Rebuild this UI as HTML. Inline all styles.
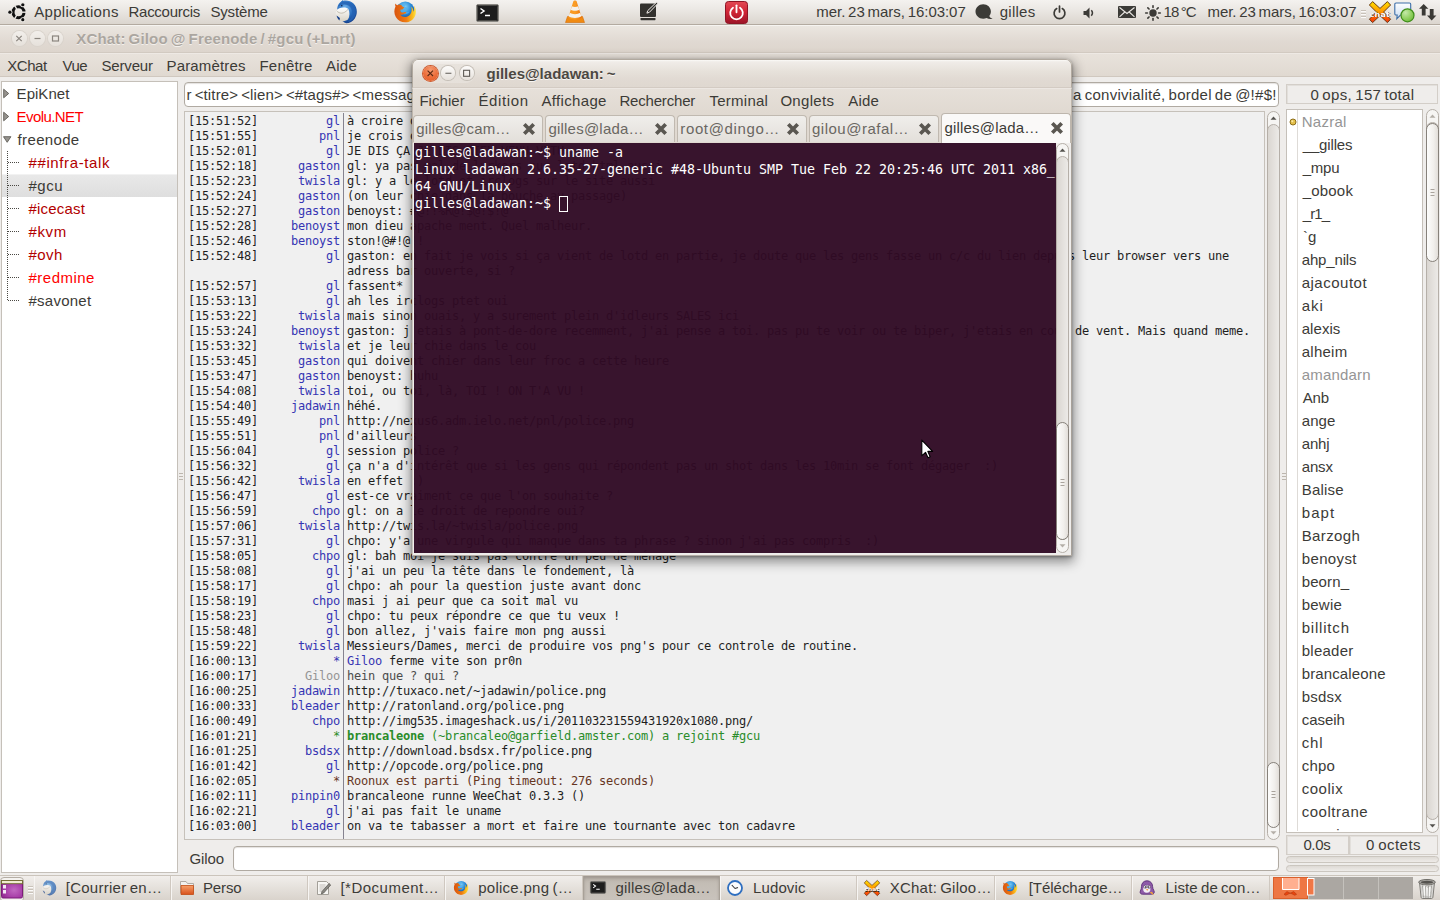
<!DOCTYPE html>
<html lang="fr"><head><meta charset="utf-8"><title>XChat: Giloo @ Freenode / #gcu (+Lnrt)</title>
<style>
*{box-sizing:border-box;margin:0;padding:0}
html,body{width:1440px;height:900px;overflow:hidden;background:#efedeb;font-family:"Liberation Sans","DejaVu Sans",sans-serif;font-size:15px;color:#3c3b37}
body{position:relative}
.a{position:absolute;white-space:pre}
svg{position:absolute;overflow:visible}
#toppanel{position:absolute;left:0;top:0;width:1440px;height:25px;background:linear-gradient(#f4f2ef,#ebe8e4 40%,#dbd5ce);border-bottom:1px solid #b3aaa0}
#toppanel span{position:absolute;top:3px;line-height:18px;white-space:pre;color:#3c3b37}
#xtitle{position:absolute;left:0;top:25px;width:1440px;height:28px;background:linear-gradient(#ebe6e0,#e0d9d2 60%,#ddd5cd);border-top:1px solid #f6f4f1;border-bottom:1px solid #d2cac1}
#xtitle span{position:absolute;top:3px;line-height:20px;font-weight:bold;color:#aba6a0;white-space:pre;text-shadow:0 1px 0 #f3f0ec}
.wb{position:absolute;width:15px;height:15px;border-radius:50%}
#xmenu{position:absolute;left:0;top:53px;width:1440px;height:24px;background:linear-gradient(#e8e2db,#e0d9d1);border-top:1px solid #eee9e4;border-bottom:1px solid #d0c8bf}
#xmenu span{position:absolute;top:2px;line-height:20px;white-space:pre}
#tree{position:absolute;left:1px;top:81px;width:177px;height:792px;background:#fff;border:1px solid #c5c0b9}
#tree .r{position:absolute;left:0;width:175px;height:23px;line-height:23px}
#tree .r span{position:absolute;top:0;white-space:pre}
#topic{position:absolute;left:184px;top:82px;width:1095px;height:25px;background:#fff;border:1px solid #b0aaa2;border-radius:4px;overflow:hidden;box-shadow:inset 0 1px 1px #e4e2df}
#topic span{position:absolute;top:2px;line-height:20px;white-space:pre}
#chat{position:absolute;left:184px;top:111px;width:1081px;height:729px;background:#f0f0f0;border:1px solid #c6c1ba;overflow:hidden;font-family:"DejaVu Sans Mono","Liberation Mono",monospace;font-size:12px;letter-spacing:-0.224px;line-height:15px;color:#1e1e1e}
#chat .l{position:absolute;left:0;width:1079px;height:15px}
#chat .l span{position:absolute;top:0;white-space:pre}
#chat .ts{left:3px}
#chat .n{right:924px;color:#3535b3}
#chat .m{left:162px}
#chat .sep{position:absolute;left:158px;top:1px;width:1px;height:726px;background:#85838f}
.sbv{position:absolute;border-radius:7px;background:#f6f5f3;border:1px solid #b5afa8}
.trough{position:absolute;border-radius:7px;background:linear-gradient(90deg,#dad6d1,#e4e1dd 55%,#eceae7);border:1px solid #b5afa8}
.thumb{position:absolute;border-radius:7px;background:linear-gradient(90deg,#fdfdfc,#f1efec 60%,#e2ded9);border:1px solid #86817a}
#ulhead{position:absolute;left:1286px;top:84px;width:152px;height:20px;border:1px solid #d3cec8;background:#efedeb;box-shadow:inset 1px 1px 0 #e2dfdb}
#ulhead span{position:absolute;top:0;line-height:20px;white-space:pre}
#ulist{position:absolute;left:1286px;top:109px;width:137px;height:724px;background:#fff;border:1px solid #c5c0b9;overflow:hidden}
#ulist span{position:absolute;height:23px;line-height:23px;white-space:pre}
#ulist .vs{position:absolute;left:10px;top:0;width:1px;height:721px;background:#dedbd7}
.stat{position:absolute;top:835px;height:20px;border:1px solid #d3cec8;background:#efedeb;box-shadow:inset 1px 1px 0 #e2dfdb}
.stat span{position:absolute;top:-1px;line-height:20px;white-space:pre}
.pbar{position:absolute;left:1286px;width:153px;height:7px;border-radius:4px;border:1px solid #cbc6bf;background:linear-gradient(#dedad5,#eeebe8)}
#input{position:absolute;left:233px;top:846px;width:1046px;height:25px;background:#fff;border:1px solid #b0aaa2;border-radius:4px;box-shadow:inset 0 1px 1px #e4e2df}
#botpanel{position:absolute;left:0;top:875px;width:1440px;height:25px;background:linear-gradient(#f1eeeb,#e6e2dd 45%,#d9d3cc);border-top:1px solid #cbc4bb}
.tb{position:absolute;top:0;height:24px;border-left:1px solid #f7f5f3;border-right:1px solid #cfc8c0}
.tb.act{background:linear-gradient(#b5aea6,#c3bdb5 30%,#c9c3bc);border-left:1px solid #a8a198;border-right:1px solid #a8a198;box-shadow:inset 0 2px 3px #9e978f}
#botpanel span{position:absolute;top:2px;line-height:20px;white-space:pre}
#tshadow{position:absolute;left:412px;top:59px;width:660px;height:497px;border-radius:6px 6px 0 0;box-shadow:0 4px 12px 2px rgba(0,0,0,.42),0 1px 3px rgba(0,0,0,.35)}
#term{position:absolute;left:412px;top:59px;width:660px;height:497px;border-radius:6px 6px 0 0;overflow:hidden}
#ttitle{position:absolute;left:0;top:0;width:660px;height:29px;border-radius:6px 6px 0 0;background:linear-gradient(#fbfaf8,#f0ece8 7%,#e7e2db 40%,#e1dad3 70%,#dfd8d0);border:1px solid #b1a99f;border-bottom:1px solid #d3cbc3}
#ttitle span{position:absolute;top:4px;line-height:20px;font-weight:bold;color:#4c4842;white-space:pre;text-shadow:0 1px 0 #f8f6f3}
#tmenu{position:absolute;left:0;top:29px;width:660px;height:25px;background:linear-gradient(#e6e0d9,#e0d9d1);border-left:1px solid #bdb5ab;border-right:1px solid #bdb5ab;border-top:1px solid #ece7e2}
#tmenu span{position:absolute;top:2px;line-height:20px;white-space:pre}
#ttabs{position:absolute;left:0;top:54px;width:660px;height:30px;background:#e0d9d1;border-left:1px solid #bdb5ab;border-right:1px solid #bdb5ab}
.tab{position:absolute;top:2px;height:27px;border:1px solid #c0b9b0;border-bottom:none;border-radius:4px 4px 0 0;background:linear-gradient(#f0eeeb,#e3dfda)}
.tab.on{top:0;height:30px;background:#faf9f8;border-color:#bdb6ad}
.tab span{position:absolute;top:3px;line-height:20px;white-space:pre;color:#6a6762}
.tab.on span{top:4px;color:#3c3b37}
.tab b{position:absolute;top:6px;width:14px;height:14px}
.tab.on b{top:7px}
.tfr{position:absolute;background:#efedeb}
#tscreen{position:absolute;left:2px;top:84px;width:642px;height:410px;background:rgba(48,10,36,.962);font-family:"DejaVu Sans Mono","Liberation Mono",monospace;font-size:13.3px;letter-spacing:-0.007px;line-height:17px;color:#fff}
#tscreen div{position:absolute;left:1px;white-space:pre;height:17px}
</style></head><body>
<div id="xtitle"><div class="wb" style="left:11.5px;top:5px;background:linear-gradient(#f2efeb,#e6e1db);box-shadow:0 0 0 1px #d9d3cc"></div><div class="wb" style="left:30.0px;top:5px;background:linear-gradient(#f2efeb,#e6e1db);box-shadow:0 0 0 1px #d9d3cc"></div><div class="wb" style="left:48.0px;top:5px;background:linear-gradient(#f2efeb,#e6e1db);box-shadow:0 0 0 1px #d9d3cc"></div><svg style="left:0;top:0" width="70" height="27" viewBox="0 0 70 27"><g stroke="#8a857f" stroke-width="1.2" fill="none"><path d="M16.3 9.800l5.400 5.400M21.700 9.800l-5.400 5.400"/><path d="M34.500 12.500h6"/><rect x="52.500" y="10" width="6" height="5"/></g></svg><span style="left:76.25px;letter-spacing:0.164px;word-spacing:-1.3px;">XChat: Giloo @ Freenode / #gcu (+Lnrt)</span></div>
<div id="xmenu"><span style="left:7.25px;letter-spacing:-0.438px;">XChat</span><span style="left:62.5px;letter-spacing:-0.5px;">Vue</span><span style="left:101.5px;letter-spacing:-0.167px;">Serveur</span><span style="left:166.5px;letter-spacing:0.167px;">Paramètres</span><span style="left:259.5px;letter-spacing:0.2px;">Fenêtre</span><span style="left:326.0px;letter-spacing:0.233px;">Aide</span></div>
<div id="tree"><div class="r" style="top:0px"><span style="left:14.6px;letter-spacing:0.033px;color:#3c3b37">EpiKnet</span></div><div class="r" style="top:23px"><span style="left:14.6px;letter-spacing:-0.575px;color:#ff0000">Evolu.NET</span></div><div class="r" style="top:46px"><span style="left:15.6px;letter-spacing:0.343px;color:#3c3b37">freenode</span></div><div class="r" style="top:69px"><span style="left:26.5px;letter-spacing:0.618px;color:#b20000">##infra-talk</span></div><div class="r" style="top:92px;background:linear-gradient(#e9e9e9,#dedede);box-shadow:inset 0 1px 0 #f2f2f2"><span style="left:26.5px;letter-spacing:0.5px;color:#3c3b37">#gcu</span></div><div class="r" style="top:115px"><span style="left:26.5px;letter-spacing:0.186px;color:#b20000">#icecast</span></div><div class="r" style="top:138px"><span style="left:26.5px;letter-spacing:0.6px;color:#b20000">#kvm</span></div><div class="r" style="top:161px"><span style="left:26.5px;letter-spacing:0.467px;color:#b20000">#ovh</span></div><div class="r" style="top:184px"><span style="left:26.5px;letter-spacing:0.486px;color:#ff0000">#redmine</span></div><div class="r" style="top:207px"><span style="left:26.5px;letter-spacing:0.243px;color:#3c3b37">#savonet</span></div><svg style="left:0;top:0" width="60" height="240" viewBox="0 0 60 240"><path d="M1.700 7.200l5 4.300-5 4.300z" fill="#96938e" stroke="#5f5c57" stroke-width=".9"/><path d="M1.700 30.200l5 4.300-5 4.300z" fill="#96938e" stroke="#5f5c57" stroke-width=".9"/><path d="M1.500 54.700h7.400l-3.700 5.600z" fill="#96938e" stroke="#5f5c57" stroke-width=".9"/><g stroke="#4a4843" stroke-width="1" stroke-dasharray="1 1" fill="none"><path d="M5.500 69v150"/><path d="M6 80.5h11"/><path d="M6 103.5h11"/><path d="M6 126.5h11"/><path d="M6 149.5h11"/><path d="M6 172.5h11"/><path d="M6 195.5h11"/><path d="M6 218.5h11"/></g></svg></div>
<div id="topic"><span style="left:1.5px;letter-spacing:0.142px;word-spacing:-1.3px">r &lt;titre&gt; &lt;lien&gt; &lt;#tags#&gt; &lt;message&gt; | GCU-Squad! : gcu.info | irclogs sur le site | Ici on cause de tout</span><span style="left:888.0px;letter-spacing:0.247px;word-spacing:-1.3px;background:#fff">a convivialité, bordel de @!#$!</span><span style="right:206px;background:#fff;padding-left:6px">et de rien, dans l</span></div>
<div id="chat"><div class="sep"></div><div class="l" style="top:2px"><span class="ts">[15:51:52]</span><span class="n">gl</span><span class="m">à croire que personne ne lit le topic</span></div><div class="l" style="top:17px"><span class="ts">[15:51:55]</span><span class="n">pnl</span><span class="m">je crois que tout le monde est parti</span></div><div class="l" style="top:32px"><span class="ts">[15:52:01]</span><span class="n">gl</span><span class="m">JE DIS ÇA JE DIS RIEN VENU VITU</span></div><div class="l" style="top:47px"><span class="ts">[15:52:18]</span><span class="n">gaston</span><span class="m">gl: ya pas mal de lurkers sur lotd.html aussi</span></div><div class="l" style="top:62px"><span class="ts">[15:52:23]</span><span class="n">twisla</span><span class="m">gl: y a le lotd et irclogs sur le site aussi</span></div><div class="l" style="top:77px"><span class="ts">[15:52:24]</span><span class="n">gaston</span><span class="m">(on leur chie dans la bouche au passage)</span></div><div class="l" style="top:92px"><span class="ts">[15:52:27]</span><span class="n">gaston</span><span class="m">benoyst: #@!!%R@!$@!$!@</span></div><div class="l" style="top:107px"><span class="ts">[15:52:28]</span><span class="n">benoyst</span><span class="m">mon dieu apache ment. Quel malheur.</span></div><div class="l" style="top:122px"><span class="ts">[15:52:46]</span><span class="n">benoyst</span><span class="m">ston!@#!@!!</span></div><div class="l" style="top:137px"><span class="ts">[15:52:48]</span><span class="n">gl</span><span class="m">gaston: en fait je vois si ça vient de lotd en partie, je doute que les gens fasse un c/c du lien depuis leur browser vers une</span></div><div class="l" style="top:152px"><span class="m">adress bar ouverte, si ?</span></div><div class="l" style="top:167px"><span class="ts">[15:52:57]</span><span class="n">gl</span><span class="m">fassent*</span></div><div class="l" style="top:182px"><span class="ts">[15:53:13]</span><span class="n">gl</span><span class="m">ah les irclogs ptet oui</span></div><div class="l" style="top:197px"><span class="ts">[15:53:22]</span><span class="n">twisla</span><span class="m">mais sinon ouais, y a surement plein d'idleurs SALES ici</span></div><div class="l" style="top:212px"><span class="ts">[15:53:24]</span><span class="n">benoyst</span><span class="m">gaston: j'etais à pont-de-dore recemment, j'ai pense a toi. pas pu te voir ou te biper, j'etais en coup de vent. Mais quand meme.</span></div><div class="l" style="top:227px"><span class="ts">[15:53:32]</span><span class="n">twisla</span><span class="m">et je leur chie dans le cou</span></div><div class="l" style="top:242px"><span class="ts">[15:53:45]</span><span class="n">gaston</span><span class="m">qui doivent chier dans leur froc a cette heure</span></div><div class="l" style="top:257px"><span class="ts">[15:53:47]</span><span class="n">gaston</span><span class="m">benoyst: huhu</span></div><div class="l" style="top:272px"><span class="ts">[15:54:08]</span><span class="n">twisla</span><span class="m">toi, ou toi, là, TOI ! ON T'A VU !</span></div><div class="l" style="top:287px"><span class="ts">[15:54:40]</span><span class="n">jadawin</span><span class="m">héhé.</span></div><div class="l" style="top:302px"><span class="ts">[15:55:49]</span><span class="n">pnl</span><span class="m">http://nexus6.adm.ielo.net/pnl/police.png</span></div><div class="l" style="top:317px"><span class="ts">[15:55:51]</span><span class="n">pnl</span><span class="m">d'ailleurs</span></div><div class="l" style="top:332px"><span class="ts">[15:56:04]</span><span class="n">gl</span><span class="m">session police ?</span></div><div class="l" style="top:347px"><span class="ts">[15:56:32]</span><span class="n">gl</span><span class="m">ça n'a d'intérêt que si les gens qui répondent pas un shot dans les 10min se font dégager  :)</span></div><div class="l" style="top:362px"><span class="ts">[15:56:42]</span><span class="n">twisla</span><span class="m">en effet :)</span></div><div class="l" style="top:377px"><span class="ts">[15:56:47]</span><span class="n">gl</span><span class="m">est-ce vraiment ce que l'on souhaite ?</span></div><div class="l" style="top:392px"><span class="ts">[15:56:59]</span><span class="n">chpo</span><span class="m">gl: on a le droit de repondre oui?</span></div><div class="l" style="top:407px"><span class="ts">[15:57:06]</span><span class="n">twisla</span><span class="m">http://twis.la/~twisla/police.png</span></div><div class="l" style="top:422px"><span class="ts">[15:57:31]</span><span class="n">gl</span><span class="m">chpo: y'a une virgule qui manque dans ta phrase ? sinon j'ai pas compris  :)</span></div><div class="l" style="top:437px"><span class="ts">[15:58:05]</span><span class="n">chpo</span><span class="m">gl: bah moi je suis pas contre un peu de ménage</span></div><div class="l" style="top:452px"><span class="ts">[15:58:08]</span><span class="n">gl</span><span class="m">j'ai un peu la tête dans le fondement, là</span></div><div class="l" style="top:467px"><span class="ts">[15:58:17]</span><span class="n">gl</span><span class="m">chpo: ah pour la question juste avant donc</span></div><div class="l" style="top:482px"><span class="ts">[15:58:19]</span><span class="n">chpo</span><span class="m">masi j ai peur que ca soit mal vu</span></div><div class="l" style="top:497px"><span class="ts">[15:58:23]</span><span class="n">gl</span><span class="m">chpo: tu peux répondre ce que tu veux !</span></div><div class="l" style="top:512px"><span class="ts">[15:58:48]</span><span class="n">gl</span><span class="m">bon allez, j'vais faire mon png aussi</span></div><div class="l" style="top:527px"><span class="ts">[15:59:22]</span><span class="n">twisla</span><span class="m">Messieurs/Dames, merci de produire vos png's pour ce controle de routine.</span></div><div class="l" style="top:542px"><span class="ts">[16:00:13]</span><span class="n">*</span><span class="m"><span style="position:static;color:#3535b3">Giloo</span> ferme vite son pr0n</span></div><div class="l" style="top:557px"><span class="ts">[16:00:17]</span><span class="n" style="color:#959595">Giloo</span><span class="m" style="color:#4c4c4c">hein que ? qui ?</span></div><div class="l" style="top:572px"><span class="ts">[16:00:25]</span><span class="n">jadawin</span><span class="m">http://tuxaco.net/~jadawin/police.png</span></div><div class="l" style="top:587px"><span class="ts">[16:00:33]</span><span class="n">bleader</span><span class="m">http://ratonland.org/police.png</span></div><div class="l" style="top:602px"><span class="ts">[16:00:49]</span><span class="n">chpo</span><span class="m">http://img535.imageshack.us/i/201103231559431920x1080.png/</span></div><div class="l" style="top:617px"><span class="ts">[16:01:21]</span><span class="n" style="color:#2a8c2a">*</span><span class="m" style="color:#2a8c2a"><b style="font-weight:bold">brancaleone</b> (~brancaleo@garfield.amster.com) a rejoint #gcu</span></div><div class="l" style="top:632px"><span class="ts">[16:01:25]</span><span class="n">bsdsx</span><span class="m">http://download.bsdsx.fr/police.png</span></div><div class="l" style="top:647px"><span class="ts">[16:01:42]</span><span class="n">gl</span><span class="m">http://opcode.org/police.png</span></div><div class="l" style="top:662px"><span class="ts">[16:02:05]</span><span class="n" style="color:#66361f">*</span><span class="m" style="color:#66361f">Roonux est parti (Ping timeout: 276 seconds)</span></div><div class="l" style="top:677px"><span class="ts">[16:02:11]</span><span class="n">pinpin0</span><span class="m">brancaleone runne WeeChat 0.3.3 ()</span></div><div class="l" style="top:692px"><span class="ts">[16:02:21]</span><span class="n">gl</span><span class="m">j'ai pas fait le uname</span></div><div class="l" style="top:707px"><span class="ts">[16:03:00]</span><span class="n">bleader</span><span class="m">on va te tabasser a mort et faire une tournante avec ton cadavre</span></div></div>
<div class="sbv" style="left:1267px;top:111px;width:13px;height:729px"></div><div class="trough" style="left:1267px;top:124px;width:13px;height:703px"></div><div class="thumb" style="left:1267px;top:762px;width:13px;height:66px"></div><svg style="left:1267px;top:111px" width="13" height="729" viewBox="0 0 13 729"><path d="M3.5 8.800h6l-3-3.300z" fill="#55534f"/><path d="M3.5 720.2h6l-3 3.300z" fill="#b4afa8"/><g stroke="#a9a39c"><path d="M4.5 680.5h4M4.5 683.5h4M4.5 686.5h4"/></g></svg><svg style="left:178px;top:470px" width="6" height="14" viewBox="0 0 6 14"><g stroke="#bcb6ae"><path d="M1 3.500h4M1 6.500h4M1 9.500h4"/></g></svg><svg style="left:1281px;top:470px" width="6" height="14" viewBox="0 0 6 14"><g stroke="#bcb6ae"><path d="M1 3.500h4M1 6.500h4M1 9.500h4"/></g></svg><div id="ulhead"><span style="left:23.5px;letter-spacing:0.327px;word-spacing:-1.3px;">0 ops, 157 total</span></div><div id="ulist"><div class="vs"></div><span style="left:14.7px;letter-spacing:0.26px;top:0px;color:#959595;">Nazral</span><span style="left:15.7px;letter-spacing:-0.143px;top:23px;">__gilles</span><span style="left:15.7px;letter-spacing:-0.233px;top:46px;">_mpu</span><span style="left:15.7px;letter-spacing:0.2px;top:69px;">_obook</span><span style="left:15.7px;letter-spacing:-0.9px;top:92px;">_r1_</span><span style="left:16.0px;letter-spacing:0.0px;top:115px;">`g</span><span style="left:14.7px;letter-spacing:-0.143px;top:138px;">ahp_nils</span><span style="left:14.7px;letter-spacing:0.5px;top:161px;">ajacoutot</span><span style="left:14.7px;letter-spacing:1.0px;top:184px;">aki</span><span style="left:14.7px;letter-spacing:0.06px;top:207px;">alexis</span><span style="left:14.7px;letter-spacing:0.26px;top:230px;">alheim</span><span style="left:14.7px;letter-spacing:0.186px;top:253px;color:#959595;">amandarn</span><span style="left:15.7px;letter-spacing:-0.2px;top:276px;">Anb</span><span style="left:14.7px;letter-spacing:0.1px;top:299px;">ange</span><span style="left:14.7px;letter-spacing:-0.133px;top:322px;">anhj</span><span style="left:14.7px;letter-spacing:-0.133px;top:345px;">ansx</span><span style="left:14.7px;letter-spacing:0.2px;top:368px;">Balise</span><span style="left:14.7px;letter-spacing:1.1px;top:391px;">bapt</span><span style="left:14.7px;letter-spacing:0.383px;top:414px;">Barzogh</span><span style="left:14.7px;letter-spacing:0.383px;top:437px;">benoyst</span><span style="left:14.7px;letter-spacing:0.12px;top:460px;">beorn_</span><span style="left:14.7px;letter-spacing:0.25px;top:483px;">bewie</span><span style="left:14.7px;letter-spacing:0.8px;top:506px;">billitch</span><span style="left:14.7px;letter-spacing:0.267px;top:529px;">bleader</span><span style="left:14.7px;letter-spacing:0.13px;top:552px;">brancaleone</span><span style="left:14.7px;letter-spacing:0.225px;top:575px;">bsdsx</span><span style="left:14.7px;letter-spacing:-0.04px;top:598px;">caseih</span><span style="left:14.7px;letter-spacing:0.8px;top:621px;">chl</span><span style="left:14.7px;letter-spacing:0.2px;top:644px;">chpo</span><span style="left:14.7px;letter-spacing:0.54px;top:667px;">coolix</span><span style="left:14.7px;letter-spacing:0.537px;top:690px;">cooltrane</span><span style="left:14.7px;letter-spacing:-0.34px;top:713px;">cosmic</span><svg style="left:2px;top:7.500px" width="8" height="8" viewBox="0 0 8 8"><circle cx="4" cy="4" r="3" fill="#e4c04a" stroke="#8d6f1c" stroke-width="1"/><circle cx="3.300" cy="3.200" r="1" fill="#f8e9a8"/></svg></div>
<div class="sbv" style="left:1426px;top:109px;width:13px;height:724px"></div><div class="trough" style="left:1426px;top:122px;width:13px;height:698px"></div><div class="thumb" style="left:1426px;top:123px;width:13px;height:139px"></div><svg style="left:1426px;top:109px" width="13" height="724" viewBox="0 0 13 724"><path d="M3.5 8.800h6l-3-3.300z" fill="#b4afa8"/><path d="M3.5 715.2h6l-3 3.300z" fill="#55534f"/><g stroke="#a9a39c"><path d="M4.5 80.5h4M4.5 83.5h4M4.5 86.5h4"/></g></svg><div class="stat" style="left:1286px;width:63px"><span style="left:16.4px;letter-spacing:-0.367px;">0.0s</span></div><div class="stat" style="left:1349px;width:89px"><span style="left:16.0px;letter-spacing:0.471px;word-spacing:-1.3px;">0 octets</span></div><div class="pbar" style="top:856px"></div><div class="pbar" style="top:865px"></div>
<div id="input"></div><span class="a" style="top:849px;line-height:20px;left:189.5px;letter-spacing:-0.125px;">Giloo</span>
<div id="tshadow"></div><div id="term"><div class="tfr" style="left:0;top:83px;width:2px;height:414px;border-left:1px solid #c9c3bc"></div><div class="tfr" style="left:644px;top:83px;width:16px;height:414px;border-right:1px solid #a8a199"></div><div class="tfr" style="left:0;top:494px;width:660px;height:3px;border-bottom:1px solid #b5aea6;border-left:1px solid #c9c3bc;border-right:1px solid #a8a199"></div><div id="tscreen"><div style="top:1px">gilles@ladawan:~$ uname -a</div><div style="top:18px">Linux ladawan 2.6.35-27-generic #48-Ubuntu SMP Tue Feb 22 20:25:46 UTC 2011 x86_</div><div style="top:35px">64 GNU/Linux</div><div style="top:52px">gilles@ladawan:~$ </div><i style="position:absolute;left:145px;top:53px;width:9px;height:16px;border:1px solid #fff"></i></div><div id="ttitle"><div style="position:absolute;left:9px;top:4px;width:53px;height:18.500px;border-radius:9px;background:linear-gradient(#e3ddd6,#ebe7e2);opacity:.55"></div><div class="wb" style="left:9.800px;top:5.800px;width:15px;height:15px;background:radial-gradient(circle at 50% 25%,#f49a70,#ec6d39 55%,#e35a25);box-shadow:0 0 0 1px #cc5a2e"></div><div class="wb" style="left:28.400px;top:6.300px;width:14px;height:14px;background:linear-gradient(#fdfcfb,#e6e1db);box-shadow:0 0 0 1px #c4beb6"></div><div class="wb" style="left:46.600px;top:6.300px;width:14px;height:14px;background:linear-gradient(#fdfcfb,#e6e1db);box-shadow:0 0 0 1px #c4beb6"></div><svg style="left:0;top:0" width="70" height="27" viewBox="0 0 70 27"><g stroke="#5b2a14" stroke-width="1.100" fill="none"><path d="M14.600 10.600l5.400 5.400M20 10.600l-5.400 5.400"/></g><g stroke="#5e5a55" stroke-width="1.100" fill="none"><path d="M32.400 13.300h6"/><rect x="50.600" y="10.300" width="6" height="6"/></g></svg><span style="left:73.6px;letter-spacing:0.006px;word-spacing:-1.3px;">gilles@ladawan: ~</span></div><div id="tmenu"><span style="left:6.4px;letter-spacing:0.05px;">Fichier</span><span style="left:65.4px;letter-spacing:0.633px;">Édition</span><span style="left:128.4px;letter-spacing:0.35px;">Affichage</span><span style="left:206.4px;letter-spacing:-0.178px;">Rechercher</span><span style="left:296.5px;letter-spacing:0.243px;">Terminal</span><span style="left:367.4px;letter-spacing:0.3px;">Onglets</span><span style="left:435.3px;letter-spacing:0.167px;">Aide</span></div><div id="ttabs"><div class="tab" style="left:0px;width:130px"><span style="left:2.3px;letter-spacing:0.13px;">gilles@cam…</span><b style="left:108px"><svg style="left:0;top:0" width="14" height="14" viewBox="0 0 14 14"><path d="M2.300 2.300l9.400 9.400M11.700 2.300l-9.400 9.400" stroke="#5a5751" stroke-width="3.700" fill="none"/></svg></b></div><div class="tab" style="left:132px;width:130px"><span style="left:2.4px;letter-spacing:0.218px;">gilles@lada…</span><b style="left:108px"><svg style="left:0;top:0" width="14" height="14" viewBox="0 0 14 14"><path d="M2.300 2.300l9.400 9.400M11.700 2.300l-9.400 9.400" stroke="#5a5751" stroke-width="3.700" fill="none"/></svg></b></div><div class="tab" style="left:264px;width:130px"><span style="left:2.3px;letter-spacing:0.63px;">root@dingo…</span><b style="left:108px"><svg style="left:0;top:0" width="14" height="14" viewBox="0 0 14 14"><path d="M2.300 2.300l9.400 9.400M11.700 2.300l-9.400 9.400" stroke="#5a5751" stroke-width="3.700" fill="none"/></svg></b></div><div class="tab" style="left:396px;width:130px"><span style="left:2.0px;letter-spacing:0.5px;">gilou@rafal…</span><b style="left:108px"><svg style="left:0;top:0" width="14" height="14" viewBox="0 0 14 14"><path d="M2.300 2.300l9.400 9.400M11.700 2.300l-9.400 9.400" stroke="#5a5751" stroke-width="3.700" fill="none"/></svg></b></div><div class="tab on" style="left:528px;width:130px"><span style="left:2.5px;letter-spacing:0.182px;">gilles@lada…</span><b style="left:108px"><svg style="left:0;top:0" width="14" height="14" viewBox="0 0 14 14"><path d="M2.300 2.300l9.400 9.400M11.700 2.300l-9.400 9.400" stroke="#5a5751" stroke-width="3.700" fill="none"/></svg></b></div></div><div class="sbv" style="left:644px;top:84px;width:13px;height:410px"></div><div class="trough" style="left:644px;top:97px;width:13px;height:384px"></div><div class="thumb" style="left:644px;top:363px;width:13px;height:118px"></div><svg style="left:644px;top:84px" width="13" height="410" viewBox="0 0 13 410"><path d="M3.5 8.800h6l-3-3.300z" fill="#55534f"/><path d="M3.5 401.2h6l-3 3.300z" fill="#b4afa8"/><g stroke="#a9a39c"><path d="M4.5 336.5h4M4.5 339.5h4M4.5 342.5h4"/></g></svg></div>
<svg style="left:921px;top:438.500px" width="14" height="20" viewBox="0 0 14 20"><path d="M.8 1.200V16.800L4.500 13.300 7 18.800 9.200 17.800 6.800 12.400H11.600z" fill="#fff" stroke="#000" stroke-width="1.100" stroke-linejoin="round"/></svg>
<div id="toppanel"><span style="left:34.3px;letter-spacing:0.291px;">Applications</span><span style="left:128.5px;letter-spacing:-0.267px;">Raccourcis</span><span style="left:210.4px;letter-spacing:-0.15px;">Système</span><span style="left:816.3px;letter-spacing:-0.043px;word-spacing:-1.3px;">mer. 23 mars, 16:03:07</span><span style="left:999.7px;letter-spacing:0.26px;">gilles</span><span style="left:1163.5px;letter-spacing:-0.8px;word-spacing:-1.3px;">18 °C</span><span style="left:1207.5px;letter-spacing:-0.062px;word-spacing:-1.3px;">mer. 23 mars, 16:03:07</span><svg style="left:0;top:0" width="0" height="0"><defs>
<radialGradient id="gTb" cx="40%" cy="30%" r="75%"><stop offset="0" stop-color="#6fb1ea"/><stop offset=".55" stop-color="#2a6fc0"/><stop offset="1" stop-color="#123a86"/></radialGradient>
<linearGradient id="gEnv" x1="0" y1="0" x2="0" y2="1"><stop offset="0" stop-color="#ffffff"/><stop offset="1" stop-color="#d8d2c4"/></linearGradient>
<radialGradient id="gGlobe" cx="45%" cy="30%" r="70%"><stop offset="0" stop-color="#8fd6f7"/><stop offset=".5" stop-color="#2b8fdc"/><stop offset="1" stop-color="#15408f"/></radialGradient>
<linearGradient id="gFox" x1="0" y1="0" x2="1" y2="0"><stop offset="0" stop-color="#d9540e"/><stop offset=".55" stop-color="#ee7a12"/><stop offset=".85" stop-color="#fbbf1c"/><stop offset="1" stop-color="#fde24a"/></linearGradient>
<linearGradient id="gRed" x1="0" y1="0" x2="0" y2="1"><stop offset="0" stop-color="#e34a55"/><stop offset=".5" stop-color="#cf2334"/><stop offset="1" stop-color="#9c1428"/></linearGradient>
<linearGradient id="gCone" x1="0" y1="0" x2="1" y2="0"><stop offset="0" stop-color="#f7931a"/><stop offset=".5" stop-color="#fb9e27"/><stop offset="1" stop-color="#e96f08"/></linearGradient>
<linearGradient id="gFold" x1="0" y1="0" x2="0" y2="1"><stop offset="0" stop-color="#f7a06a"/><stop offset="1" stop-color="#d8501a"/></linearGradient>
<radialGradient id="gPurp" cx="60%" cy="55%" r="70%"><stop offset="0" stop-color="#c169c1"/><stop offset=".6" stop-color="#a83fa8"/><stop offset="1" stop-color="#8c288c"/></radialGradient>
<linearGradient id="gXc" x1="0" y1="0" x2="0" y2="1"><stop offset="0" stop-color="#ffe100"/><stop offset=".45" stop-color="#ff9d00"/><stop offset=".75" stop-color="#ff5a00"/><stop offset="1" stop-color="#f23a12"/></linearGradient>
<linearGradient id="gBub" x1="0" y1="0" x2="0" y2="1"><stop offset="0" stop-color="#fdfeff"/><stop offset="1" stop-color="#c9dcf2"/></linearGradient>
<radialGradient id="gGrn" cx="35%" cy="30%" r="80%"><stop offset="0" stop-color="#c4e8a8"/><stop offset=".6" stop-color="#8fcf5e"/><stop offset="1" stop-color="#6db83a"/></radialGradient>
</defs></svg><svg style="left:6.5px;top:2px" width="24" height="22" viewBox="0 0 24 22" ><circle cx="11.5" cy="10.2" r="5.500" fill="none" stroke="#111" stroke-width="3.100"/><path d="M14.70 10.20L19.30 10.20" stroke="#e9e6e2" stroke-width="1.400"/><path d="M9.90 7.43L7.60 3.45" stroke="#e9e6e2" stroke-width="1.400"/><path d="M9.90 12.97L7.60 16.95" stroke="#e9e6e2" stroke-width="1.400"/><circle cx="2.90" cy="10.20" r="2.500" fill="#e9e6e2"/><circle cx="2.90" cy="10.20" r="1.600" fill="#111"/><circle cx="15.80" cy="2.75" r="2.500" fill="#e9e6e2"/><circle cx="15.80" cy="2.75" r="1.600" fill="#111"/><circle cx="15.80" cy="17.65" r="2.500" fill="#e9e6e2"/><circle cx="15.80" cy="17.65" r="1.600" fill="#111"/></svg><svg style="left:334px;top:0px" width="24" height="24" viewBox="0 0 24 24" ><path d="M6 2.500C9.500-.5 16 .2 19.500 3.600c4 3.900 4.300 10.500 1.300 14.800-2 2.900-5.200 4.800-8.600 4.900-2.500-1-4.700-2.600-6.200-4.800C3.500 14.800 2.300 9.500 4 5.300c.5-1.100 1.200-2 2-2.800z" fill="url(#gTb)"/><path d="M2.200 10.500c2.300-3 8.500-4 12-1.800 1.800 3.300 1.700 8-.3 10.800-2.600 2-6.600 2.400-9.600 1-2.300-2.700-3.200-6.600-2.100-10z" fill="url(#gEnv)"/><path d="M2.600 10.800c3 3.200 7 3.600 11.400-1.400" fill="none" stroke="#b9b2a3" stroke-width=".8"/><path d="M4.400 6.500c2.700-2.300 7-2.700 10-1 2.700 1.600 4 4.700 3.800 8-.2 3.500-1.700 6.300-4.600 8.500 3.600-.6 6.500-3 7.700-6.400 1.300-3.800.4-8.300-2.500-11.200C15.400 1 9.500.6 6 3.300c-.8 1-1.300 2-1.600 3.200z" fill="#2463b4" opacity=".85"/><path d="M6.500 2.600L8.800 0l.9 2.300z" fill="#2a6fc0"/><path d="M2.500 15.500c.5 2 1.500 3.600 3 5l.4-2.400z" fill="#123a86"/><circle cx="7.800" cy="5.800" r=".8" fill="#0b1f4d"/></svg><svg style="left:393px;top:0px" width="24" height="24" viewBox="0 0 24 24" ><circle cx="12.300" cy="10.800" r="9.300" fill="url(#gGlobe)"/><path d="M9 4.500c1.500-.9 3.300-.5 4.500.3-1 .3-1.700 1-1.800 2 1.200.6 2.500.6 3.200 1.400-.8 1.300-2.800 1-3.300 2.500 1 1.500 3.200 1.600 5 .8-1 2.300-3.700 3.400-6.200 2.500-2-.8-3-2.700-2.900-4.800z" fill="#4eb0ee" opacity=".7"/><path d="M2.300 3.600c-.3 1.200-.2 2.100.2 3C1 9.600.8 13.600 2.800 17c2.300 3.900 6.800 6 11.200 5.200 4.300-.8 7.800-4 8.700-8.300.6-3-.1-6.200-1.800-8.500.6 2.500.5 4.600-.3 6.300-.2-2-1-3.800-2.500-5.100 1.300 3.600.4 7.600-2.700 9.500-2.800 1.700-6.500 1-8.300-1.600 1.300.5 2.700.3 3.800-.4 1-.7 1.700-.6 2.200-.9.500-.4.200-1.100-.3-1.200-1.300-.3-2.300.8-3.700.6-1.500-.3-2.100-1.700-1.700-2.900.4-.3 1.300-.2 2 .1.100-1.100 1.500-1.500 2-2.300-1.400-.2-2.600-1.100-3-2.400C7 4.300 5.600 4.300 4.300 5.300 3.400 5 2.700 4.400 2.300 3.600z" fill="url(#gFox)"/></svg><svg style="left:476px;top:4px" width="23" height="18" viewBox="0 0 23 18" ><rect x=".5" y=".5" width="22" height="17" rx="1.500" fill="#1d1d1d" stroke="#8b8984"/><rect x="1.500" y="1.500" width="20" height="15" rx=".8" fill="none" stroke="#4b4a47"/><path d="M4.500 4.500l3.500 2.500-3.500 2.500" fill="none" stroke="#fff" stroke-width="1.500"/><path d="M9 11.500h5" stroke="#fff" stroke-width="1.500"/></svg><svg style="left:564px;top:0px" width="22" height="24" viewBox="0 0 22 24" ><path d="M1.500 22.500l2-6h15l2 6z" fill="#f08a12" stroke="#d46b05" stroke-width=".6"/><path d="M9.300 1.500c.4-1.400 3-1.400 3.400 0l5 16c-1.600 2.600-11.800 2.600-13.400 0z" fill="url(#gCone)"/><path d="M7.900 6.300c1.600 1 4.600 1 6.200 0l1.100 3.500c-2 1.400-6.400 1.400-8.400 0z" fill="#f4f1ec"/><path d="M5.800 12.800c2.400 1.800 8 1.800 10.400 0l1.100 3.500c-2.800 2.200-9.800 2.200-12.600 0z" fill="#f4f1ec"/></svg><svg style="left:639px;top:1px" width="21" height="21" viewBox="0 0 21 21" ><rect x="1" y="2.500" width="16" height="13.500" rx="1" fill="#33322e"/><rect x="1.500" y="17" width="15" height="2.200" rx=".6" fill="#33322e"/><path d="M8.700 9.700l8.300-8c.9-.8 2.200.5 1.400 1.300l-8 8.300-2.500.9z" fill="#33322e" stroke="#efece8" stroke-width="1"/></svg><svg style="left:725px;top:1px" width="23" height="23" viewBox="0 0 23 23" ><rect x=".5" y=".5" width="22" height="22" rx="3" fill="url(#gRed)" stroke="#8e1525"/><path d="M8 6.800a6.300 6.300 0 1 0 7 0" fill="none" stroke="#fff" stroke-width="1.800" stroke-linecap="round"/><path d="M11.500 4.300v7" stroke="#fff" stroke-width="1.800" stroke-linecap="round"/></svg><svg style="left:975.3px;top:4.3px" width="19" height="16" viewBox="0 0 19 16" ><path d="M8.200.3c4.300 0 7.700 3.200 7.700 7.300 0 1.700-.6 3.200-1.600 4.500.6 1.300 1.700 2.200 3.300 2.700-2.300.6-4.400.2-6-.8-1 .5-2.200.8-3.400.8C3.900 14.800.5 11.600.5 7.600S3.900.3 8.200.3z" fill="#3c3b37"/></svg><svg style="left:1051.5px;top:4.5px" width="15" height="15" viewBox="0 0 15 15" ><path d="M4.700 3.600a5.400 5.400 0 1 0 5.600 0" fill="none" stroke="#3c3b37" stroke-width="1.700" stroke-linecap="round"/><path d="M7.500 1v6" stroke="#3c3b37" stroke-width="1.700" stroke-linecap="round"/></svg><svg style="left:1083px;top:7px" width="13" height="12" viewBox="0 0 13 12" ><path d="M.5 4h2.500l3.500-3.500v11L3 8H.5z" fill="#3c3b37"/><path d="M8.300 3.300c1.300 1.500 1.300 3.900 0 5.400" fill="none" stroke="#3c3b37" stroke-width="1.500"/></svg><svg style="left:1118px;top:6px" width="18" height="12" viewBox="0 0 18 12" ><rect x="0" y="0" width="18" height="12" rx="1" fill="#3c3b37"/><path d="M1.500 1.500l7.500 6 7.500-6M1.500 10.800l5.300-4.800M16.500 10.800l-5.300-4.800" fill="none" stroke="#ece9e5" stroke-width="1.100"/></svg><svg style="left:1144.5px;top:4.5px" width="16" height="16" viewBox="0 0 16 16" ><circle cx="8" cy="8" r="3.700" fill="#3c3b37"/><path d="M13.60 8.00L15.30 8.00" stroke="#3c3b37" stroke-width="1.600" stroke-linecap="round"/><path d="M11.96 11.96L13.16 13.16" stroke="#3c3b37" stroke-width="1.600" stroke-linecap="round"/><path d="M8.00 13.60L8.00 15.30" stroke="#3c3b37" stroke-width="1.600" stroke-linecap="round"/><path d="M4.04 11.96L2.84 13.16" stroke="#3c3b37" stroke-width="1.600" stroke-linecap="round"/><path d="M2.40 8.00L0.70 8.00" stroke="#3c3b37" stroke-width="1.600" stroke-linecap="round"/><path d="M4.04 4.04L2.84 2.84" stroke="#3c3b37" stroke-width="1.600" stroke-linecap="round"/><path d="M8.00 2.40L8.00 0.70" stroke="#3c3b37" stroke-width="1.600" stroke-linecap="round"/><path d="M11.96 4.04L13.16 2.84" stroke="#3c3b37" stroke-width="1.600" stroke-linecap="round"/></svg><svg style="left:1360px;top:8.5px" width="7" height="12" viewBox="0 0 7 12" ><g stroke="#fbfaf9" stroke-width="1"><path d="M1 2.500h5M1 5.500h5M1 8.500h5"/></g><g stroke="#c9c2b9" stroke-width="1"><path d="M1 1.500h5M1 4.500h5M1 7.500h5"/></g></svg><svg style="left:1369px;top:1px" width="22" height="22" viewBox="0 0 22 22" ><path d="M3.600 .6L11 7.400 18.400 .6 21.600 4 14.600 11 21.600 18.200 18.400 21.600 11 14.600 3.600 21.600 .4 18.200 7.400 11 .4 4z" fill="url(#gXc)" stroke="#5a2c08" stroke-width=".9" stroke-linejoin="round"/><text x="11.300" y="16.300" text-anchor="middle" font-family="DejaVu Sans,Liberation Sans,sans-serif" font-size="7" font-weight="bold" fill="#1a1a1a" textLength="20" lengthAdjust="spacingAndGlyphs">chat</text><text x="10.800" y="15.700" text-anchor="middle" font-family="DejaVu Sans,Liberation Sans,sans-serif" font-size="7" font-weight="bold" fill="#fff" textLength="20" lengthAdjust="spacingAndGlyphs">chat</text></svg><svg style="left:1394px;top:1.5px" width="21" height="21" viewBox="0 0 21 21" ><path d="M2 1h13.500a1.200 1.200 0 0 1 1.200 1.200v9.600a1.200 1.200 0 0 1-1.200 1.200H6.500L2.800 16.800 3.200 13H2a1.200 1.200 0 0 1-1.200-1.200V2.200A1.200 1.200 0 0 1 2 1z" fill="url(#gBub)" stroke="#3d6ea8" stroke-width="1.100"/><circle cx="13.500" cy="13.300" r="6.500" fill="url(#gGrn)" stroke="#3f8e1a" stroke-width="1.200"/></svg><svg style="left:1419.3px;top:4.1px" width="18" height="17" viewBox="0 0 18 17" ><path d="M4.700 0l4.700 4.800H6.600v6.800H2.800V4.800H0z" fill="#3a3935"/><path d="M12.700 16.400L8 11.600h2.800V5h3.800v6.600h2.800z" fill="#3a3935"/></svg></div>
<div id="botpanel"><div class="tb" style="left:34px;width:137px"></div><span style="left:65.7px;letter-spacing:0.275px;word-spacing:-1.3px;">[Courrier en…</span><div class="tb" style="left:171px;width:137px"></div><span style="left:203.0px;letter-spacing:-0.15px;">Perso</span><div class="tb" style="left:308px;width:137px"></div><span style="left:340.4px;letter-spacing:0.5px;">[*Document…</span><div class="tb" style="left:445px;width:138px"></div><span style="left:478.2px;letter-spacing:0.267px;word-spacing:-1.3px;">police.png (…</span><div class="tb act" style="left:583px;width:137px"></div><span style="left:615.4px;letter-spacing:0.209px;">gilles@lada…</span><div class="tb" style="left:720px;width:137px"></div><span style="left:753.0px;letter-spacing:0.117px;">Ludovic</span><div class="tb" style="left:857px;width:138px"></div><span style="left:889.7px;letter-spacing:0.25px;word-spacing:-1.3px;">XChat: Giloo…</span><div class="tb" style="left:995px;width:137px"></div><span style="left:1028.7px;letter-spacing:-0.027px;">[Télécharge…</span><div class="tb" style="left:1132px;width:138px"></div><span style="left:1165.4px;letter-spacing:0.158px;word-spacing:-1.3px;">Liste de con…</span><svg style="left:0px;top:0px" width="24" height="25" viewBox="0 0 24 25" ><rect x=".5" y="1.500" width="23" height="24" rx="3.500" fill="#f4f2ef" stroke="#b5aea5"/><rect x="1.500" y="4.500" width="21" height="17.500" rx="1.500" fill="url(#gPurp)" stroke="#7d1c7a" stroke-width="1"/><rect x="1.500" y="4.500" width="21" height="3.200" fill="#f0ecd0" stroke="#6f6d2c" stroke-width=".9"/><rect x="3" y="9" width="3" height="3.500" fill="#f4e6f4"/><rect x="3" y="14" width="3" height="3.500" fill="#f4e6f4"/></svg><svg style="left:26.5px;top:9px" width="7" height="12" viewBox="0 0 7 12" ><g stroke="#fbfaf9" stroke-width="1"><path d="M1 2.500h5M1 5.500h5M1 8.500h5"/></g><g stroke="#c9c2b9" stroke-width="1"><path d="M1 1.500h5M1 4.500h5M1 7.500h5"/></g></svg><svg opacity=".7" style="left:41px;top:4px" width="16" height="16" viewBox="0 0 24 24" ><path d="M6 2.500C9.500-.5 16 .2 19.500 3.600c4 3.900 4.300 10.500 1.300 14.800-2 2.900-5.200 4.800-8.600 4.900-2.500-1-4.700-2.600-6.200-4.800C3.500 14.800 2.300 9.500 4 5.300c.5-1.100 1.200-2 2-2.800z" fill="url(#gTb)"/><path d="M2.200 10.500c2.300-3 8.500-4 12-1.800 1.800 3.300 1.700 8-.3 10.800-2.600 2-6.600 2.400-9.600 1-2.300-2.700-3.200-6.600-2.100-10z" fill="url(#gEnv)"/><path d="M2.600 10.800c3 3.200 7 3.600 11.400-1.400" fill="none" stroke="#b9b2a3" stroke-width=".8"/><path d="M4.400 6.500c2.700-2.300 7-2.700 10-1 2.700 1.600 4 4.700 3.800 8-.2 3.500-1.700 6.300-4.600 8.500 3.600-.6 6.500-3 7.700-6.400 1.300-3.800.4-8.300-2.500-11.200C15.400 1 9.500.6 6 3.300c-.8 1-1.300 2-1.600 3.200z" fill="#2463b4" opacity=".85"/><path d="M6.500 2.600L8.800 0l.9 2.300z" fill="#2a6fc0"/><path d="M2.500 15.500c.5 2 1.500 3.600 3 5l.4-2.400z" fill="#123a86"/><circle cx="7.800" cy="5.800" r=".8" fill="#0b1f4d"/></svg><svg style="left:179px;top:4px" width="16" height="16" viewBox="0 0 16 16" ><path d="M1.500 1.500h5.500l1.500 2h6v9.500h-13z" fill="#f2f0ed" stroke="#a9a49d" stroke-width=".9"/><path d="M2 5.500h12.500v9h-12.500z" fill="url(#gFold)" stroke="#c24a12" stroke-width=".8"/></svg><svg style="left:315px;top:4px" width="17" height="16" viewBox="0 0 17 16" ><path d="M2.500 1.500h9l2 2v11h-11z" fill="#f7f6f3" stroke="#9a968f" stroke-width=".9"/><g stroke="#b5b1aa" stroke-width=".8"><path d="M4.500 5h6M4.500 7h6M4.500 9h5M4.500 11h4"/></g><path d="M7 11.500l7-8 1.700 1.500-7 8-2.400.9z" fill="#8a8882" stroke="#55534e" stroke-width=".7"/></svg><svg style="left:453px;top:4px" width="16" height="16" viewBox="0 0 24 24" ><circle cx="12.300" cy="10.800" r="9.300" fill="url(#gGlobe)"/><path d="M9 4.500c1.500-.9 3.300-.5 4.500.3-1 .3-1.700 1-1.800 2 1.200.6 2.500.6 3.200 1.400-.8 1.300-2.800 1-3.300 2.500 1 1.500 3.200 1.600 5 .8-1 2.300-3.700 3.400-6.200 2.500-2-.8-3-2.700-2.900-4.800z" fill="#4eb0ee" opacity=".7"/><path d="M2.300 3.600c-.3 1.200-.2 2.100.2 3C1 9.600.8 13.600 2.800 17c2.300 3.900 6.800 6 11.200 5.200 4.300-.8 7.800-4 8.700-8.300.6-3-.1-6.200-1.800-8.500.6 2.500.5 4.600-.3 6.300-.2-2-1-3.800-2.500-5.100 1.300 3.600.4 7.600-2.700 9.500-2.800 1.700-6.500 1-8.300-1.600 1.300.5 2.700.3 3.800-.4 1-.7 1.700-.6 2.200-.9.500-.4.200-1.100-.3-1.200-1.300-.3-2.300.8-3.700.6-1.500-.3-2.100-1.700-1.700-2.900.4-.3 1.300-.2 2 .1.100-1.100 1.500-1.500 2-2.300-1.400-.2-2.600-1.100-3-2.400C7 4.300 5.600 4.300 4.300 5.300 3.400 5 2.700 4.400 2.300 3.600z" fill="url(#gFox)"/></svg><svg style="left:590px;top:5px" width="16" height="13" viewBox="0 0 23 18" ><rect x=".5" y=".5" width="22" height="17" rx="1.500" fill="#1d1d1d" stroke="#8b8984"/><rect x="1.500" y="1.500" width="20" height="15" rx=".8" fill="none" stroke="#4b4a47"/><path d="M4.500 4.500l3.500 2.500-3.500 2.500" fill="none" stroke="#fff" stroke-width="1.500"/><path d="M9 11.500h5" stroke="#fff" stroke-width="1.500"/></svg><svg style="left:727px;top:4px" width="16" height="16" viewBox="0 0 16 16" ><circle cx="8" cy="8" r="7" fill="#fdfdfd" stroke="#2f6fc0" stroke-width="1.800"/><path d="M8 8.500L4.800 5M8 8.500l3-1" stroke="#333" stroke-width="1.100" fill="none"/></svg><svg style="left:864px;top:4px" width="16" height="16" viewBox="0 0 22 22" ><path d="M3.600 .6L11 7.400 18.400 .6 21.600 4 14.600 11 21.600 18.200 18.400 21.600 11 14.600 3.600 21.600 .4 18.200 7.400 11 .4 4z" fill="url(#gXc)" stroke="#5a2c08" stroke-width=".9" stroke-linejoin="round"/><text x="11.300" y="16.300" text-anchor="middle" font-family="DejaVu Sans,Liberation Sans,sans-serif" font-size="7" font-weight="bold" fill="#1a1a1a" textLength="20" lengthAdjust="spacingAndGlyphs">chat</text><text x="10.800" y="15.700" text-anchor="middle" font-family="DejaVu Sans,Liberation Sans,sans-serif" font-size="7" font-weight="bold" fill="#fff" textLength="20" lengthAdjust="spacingAndGlyphs">chat</text></svg><svg style="left:1002px;top:4px" width="16" height="16" viewBox="0 0 24 24" ><circle cx="12.300" cy="10.800" r="9.300" fill="url(#gGlobe)"/><path d="M9 4.500c1.500-.9 3.300-.5 4.500.3-1 .3-1.700 1-1.800 2 1.200.6 2.500.6 3.200 1.400-.8 1.300-2.800 1-3.300 2.500 1 1.500 3.200 1.600 5 .8-1 2.300-3.700 3.400-6.200 2.500-2-.8-3-2.700-2.900-4.800z" fill="#4eb0ee" opacity=".7"/><path d="M2.300 3.600c-.3 1.200-.2 2.100.2 3C1 9.600.8 13.600 2.800 17c2.300 3.900 6.800 6 11.200 5.200 4.300-.8 7.800-4 8.700-8.300.6-3-.1-6.200-1.800-8.500.6 2.500.5 4.600-.3 6.300-.2-2-1-3.800-2.500-5.100 1.300 3.600.4 7.600-2.700 9.500-2.800 1.700-6.500 1-8.300-1.600 1.300.5 2.700.3 3.800-.4 1-.7 1.700-.6 2.200-.9.500-.4.200-1.100-.3-1.200-1.300-.3-2.300.8-3.700.6-1.500-.3-2.100-1.700-1.700-2.900.4-.3 1.300-.2 2 .1.100-1.100 1.500-1.500 2-2.300-1.400-.2-2.600-1.100-3-2.400C7 4.300 5.600 4.300 4.300 5.300 3.400 5 2.700 4.400 2.300 3.600z" fill="url(#gFox)"/></svg><svg style="left:1139px;top:4px" width="16" height="16" viewBox="0 0 16 16" ><path d="M8 .8c3.400 0 5.600 2.400 5.600 5.800 0 1.300.5 2.600 1.400 4.300.8 1.600-.2 3.300-2.200 3.300H3.400C1.400 14.200.6 12.500 1.400 11 2.200 9.400 2.500 8 2.500 6.600 2.500 3.200 4.600.8 8 .8z" fill="#8e5aa8" stroke="#5b2f78" stroke-width=".9"/><ellipse cx="7.800" cy="9" rx="3.600" ry="3.800" fill="#f3eef6"/><circle cx="6.300" cy="6.800" r="1.600" fill="#fff" stroke="#3a2050" stroke-width=".5"/><circle cx="10" cy="6.800" r="1.600" fill="#fff" stroke="#3a2050" stroke-width=".5"/><circle cx="6.600" cy="7" r=".7" fill="#111"/><circle cx="9.700" cy="7" r=".7" fill="#111"/><path d="M7 9.300l1.200 1.500 1.200-1.500z" fill="#f08a12"/><path d="M10.500 12.500l4.500 2.800-2-3.500z" fill="#f3a33a"/></svg><svg style="left:1273px;top:1px" width="141" height="22" viewBox="0 0 141 22" ><rect x="0" y="0" width="140" height="22" fill="#aba7a2"/><rect x=".5" y=".5" width="34" height="21" fill="#ee7744" stroke="#d9602c"/><g stroke="#c4c1bc" stroke-width="1"><path d="M35.500 0v22M70.500 0v22M105.500 0v22"/></g><path d="M9.500 1v11.500h16.500V1z" fill="#ffaf90"/><path d="M9.500 1v11.500h16.500V1" fill="none" stroke="#fff" stroke-width="1"/><rect x="34.500" y="1.500" width="6.500" height="16.500" fill="#f07746" stroke="#fff" stroke-width="1"/><path d="M11 17.300l3-2.800 3.300 1.800 3.300-1.800 3 2.800-1.800 1-4.500-2.300-4.500 2.300z" fill="#e8450f" stroke="#a8320a" stroke-width=".5"/></svg><svg style="left:1417px;top:1.5px" width="20" height="21" viewBox="0 0 20 21" ><path d="M2.500 4.500h15l-1.600 14.800c-.1.700-.6 1.200-1.300 1.200H5.400c-.7 0-1.200-.5-1.300-1.200z" fill="#d9d8d5" stroke="#7f7d78" stroke-width="1"/><ellipse cx="10" cy="4.200" rx="8.300" ry="2.700" fill="#a9a7a2" stroke="#6f6d68"/><path d="M5 9l3 -2 2.500 2.500 3-1.500 2 3-1.500 3.500 1 3-3.500 1.500-3-1-3 .5-.8-4z" fill="#f7f7f5" stroke="#c5c3bf" stroke-width=".6"/><g stroke="#8f8d88" stroke-width=".9" opacity=".8"><path d="M5.500 7.500l1 12M8.500 7.800l.4 12.200M11.500 7.800l-.4 12.200M14.500 7.500l-1 12"/></g><ellipse cx="10" cy="4.200" rx="6.300" ry="1.500" fill="#55534f"/></svg></div>
</body></html>
